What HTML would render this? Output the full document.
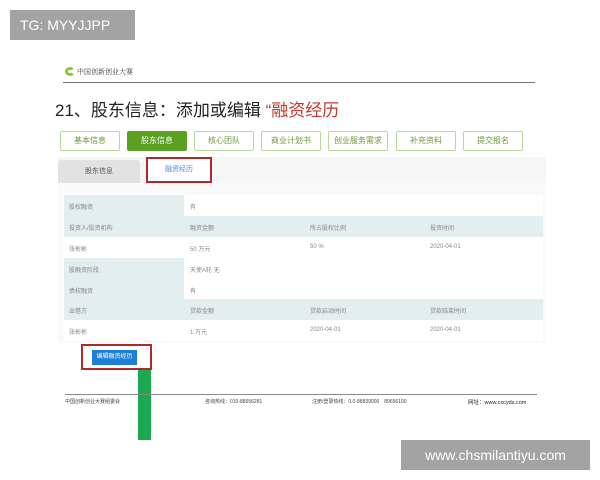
<!DOCTYPE html>
<html><head><meta charset="utf-8"><style>
*{margin:0;padding:0;box-sizing:border-box}
body{width:600px;height:480px;background:#fff;position:relative;overflow:hidden;font-family:"Liberation Sans","Noto Sans CJK SC",sans-serif}
.a{position:absolute}
.tab{position:absolute;top:131px;width:60px;height:20px;border:1px solid #b9d79a;border-radius:2px;font-size:8px;color:#6a9a3a;text-align:center;line-height:18px;background:#fff}
.row{position:absolute;left:64px;width:479px;height:21px;font-size:6px;color:#888}
.row span{position:absolute;top:7px}
.h{background:#e3eeee}
</style></head><body>
<div class="a" style="left:10px;top:10px;width:125px;height:30px;background:#a3a3a3;color:#fff;font-size:14px;line-height:30px;padding-left:10px">TG: MYYJJPP</div>
<div class="a" style="left:65px;top:67px;width:10px;height:9px;border-radius:50%;border:3px solid #8cc63f;border-right-color:transparent"></div>
<div class="a" style="left:77px;top:67px;font-size:7px;color:#333;font-family:'Noto Serif CJK SC',serif">中国创新创业大赛</div>
<div class="a" style="left:63px;top:82px;width:472px;height:1px;background:#777"></div>
<div class="a" style="left:55px;top:96px;font-size:17px;color:#222;font-family:'Liberation Sans','Noto Sans CJK SC',sans-serif">21、股东信息：添加或编辑 <span style="color:#c0392b">“融资经历</span></div>
<div class="tab" style="left:60px">基本信息</div>
<div class="tab" style="left:127px;background:#5aa021;border-color:#5aa021;color:#fff">股东信息</div>
<div class="tab" style="left:194px">核心团队</div>
<div class="tab" style="left:261px">商业计划书</div>
<div class="tab" style="left:328px">创业服务需求</div>
<div class="tab" style="left:396px">补充资料</div>
<div class="tab" style="left:463px">提交报名</div>
<div class="a" style="left:58px;top:157px;width:488px;height:26px;background:#f6f6f6"></div>
<div class="a" style="left:58px;top:160px;width:82px;height:23px;background:#e2e2e2;border-radius:3px 3px 0 0;font-size:7px;color:#555;text-align:center;line-height:23px">股东信息</div>
<div class="a" style="left:146px;top:157px;width:66px;height:26px;background:#fff;border:2px solid #b0282a;font-size:7px;color:#4a8ad0;text-align:center;line-height:22px">融资经历</div>
<div class="a" style="left:58px;top:183px;width:488px;height:160px;background:#fafafa"></div>
<div class="row" style="top:195px;background:#fff"><div class="a h" style="left:0;top:0;width:120px;height:21px"></div><span style="left:5px">股权融资</span><span style="left:126px">有</span></div>
<div class="row h" style="top:216px"><span style="left:5px">投资人/投资机构</span><span style="left:126px">融资金额</span><span style="left:246px">所占股权比例</span><span style="left:366px">投资时间</span></div>
<div class="row" style="top:237px;background:#fff"><span style="left:5px">张彬彬</span><span style="left:126px">50 万元</span><span style="left:246px">50 %</span><span style="left:366px">2020-04-01</span></div>
<div class="row" style="top:258px;background:#fff"><div class="a h" style="left:0;top:0;width:120px;height:21px"></div><span style="left:5px">股融资阶段</span><span style="left:126px">天使A轮 无</span></div>
<div class="row" style="top:279px;background:#fff"><div class="a h" style="left:0;top:0;width:120px;height:20px"></div><span style="left:5px">债权融资</span><span style="left:126px">有</span></div>
<div class="row h" style="top:299px"><span style="left:5px">出借方</span><span style="left:126px">贷款金额</span><span style="left:246px">贷款启动时间</span><span style="left:366px">贷款结束时间</span></div>
<div class="row" style="top:320px;background:#fff"><span style="left:5px">张彬彬</span><span style="left:126px">1 万元</span><span style="left:246px">2020-04-01</span><span style="left:366px">2020-04-01</span></div>
<div class="a" style="left:81px;top:344px;width:71px;height:26px;border:2px solid #b0282a"></div>
<div class="a" style="left:92px;top:350px;width:45px;height:15px;background:#1e7fd8;color:#fff;font-size:6px;text-align:center;line-height:15px">编辑融资经历</div>
<div class="a" style="left:138px;top:370px;width:13px;height:70px;background:#1aa94e"></div>
<div class="a" style="left:65px;top:394px;width:472px;height:1px;background:#888"></div>
<div class="a" style="left:65px;top:398px;font-size:5px;color:#444">中国创新创业大赛组委会</div>
<div class="a" style="left:205px;top:398px;font-size:5px;color:#444">咨询热线：010-88656281</div>
<div class="a" style="left:312px;top:398px;font-size:5px;color:#444">注册/登录热线：0.0-88839000　89656100</div>
<div class="a" style="left:468px;top:398px;font-size:5.5px;color:#222">网址：www.cxcyds.com</div>
<div class="a" style="left:401px;top:440px;width:189px;height:30px;background:#a3a3a3;color:#fff;font-size:14px;line-height:30px;text-align:center">www.chsmilantiyu.com</div>
</body></html>
